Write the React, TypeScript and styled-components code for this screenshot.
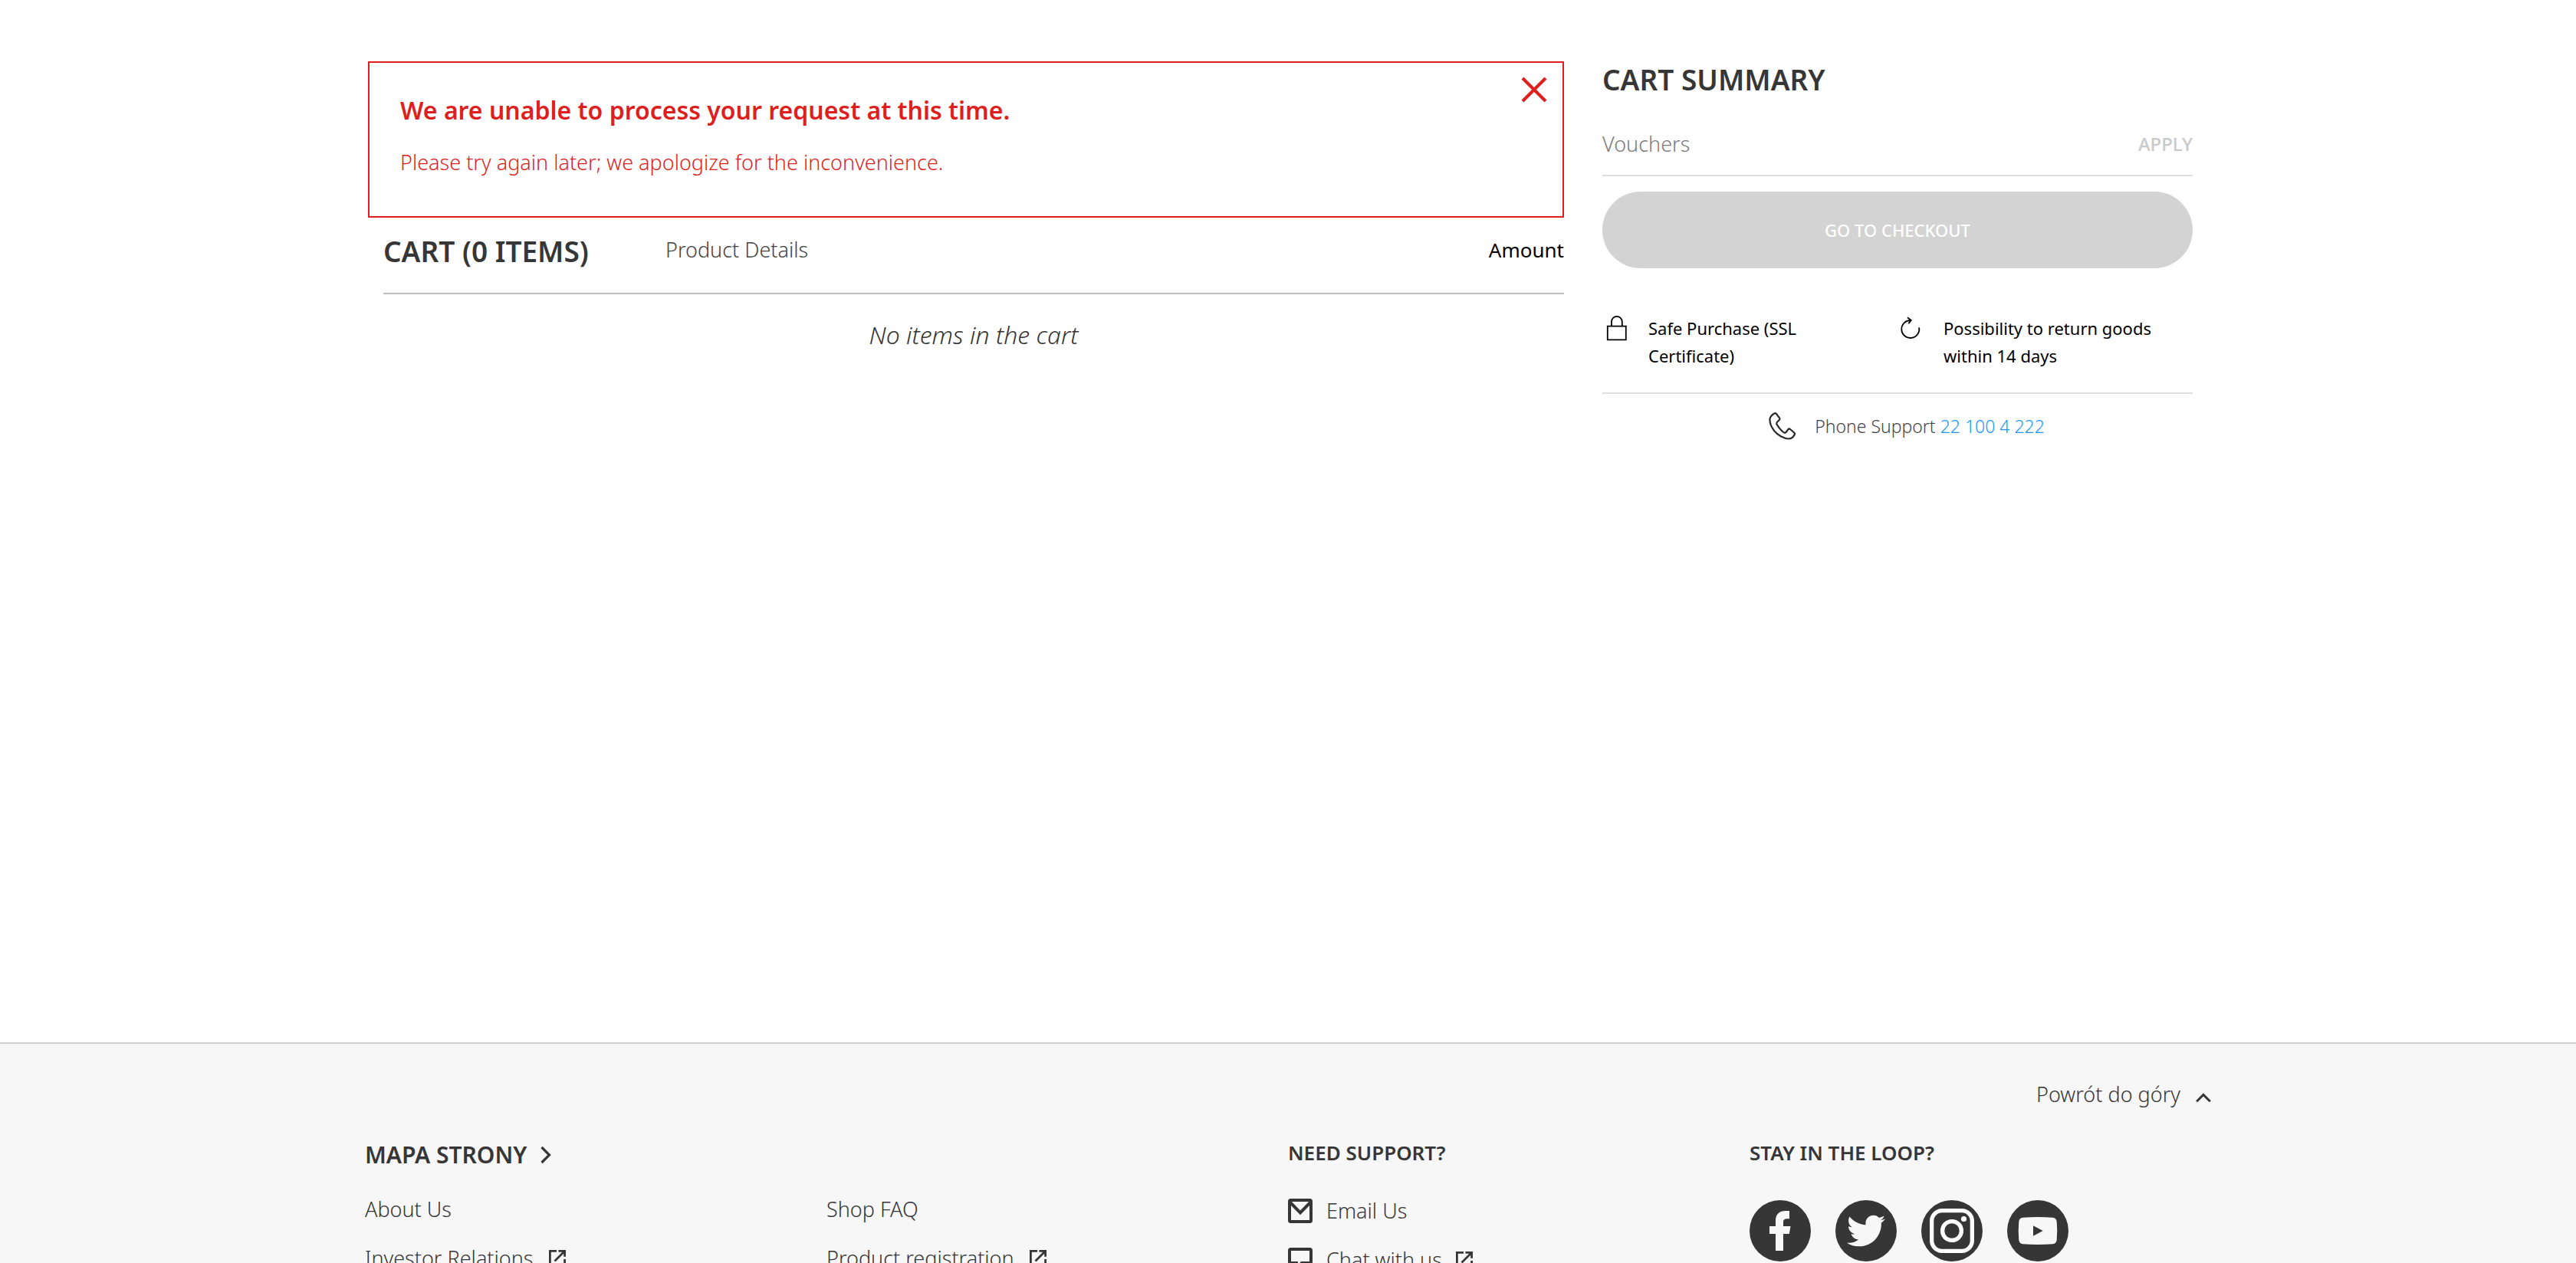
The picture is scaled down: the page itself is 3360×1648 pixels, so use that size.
import React, { useState } from 'react';
import styled, { createGlobalStyle } from 'styled-components';
import { FaTwitter } from 'react-icons/fa';

const ink = '#363636';
const red = '#dd1f1f';

const GlobalStyle = createGlobalStyle`
  *, *::before, *::after { box-sizing: border-box; }
  body {
    margin: 0;
    background: #fff;
    color: ${ink};
    font-family: 'Noto Sans', 'Open Sans', sans-serif;
    font-size: 27px;
    font-weight: 300;
    line-height: 40px;
  }
  h1, h2, h3, p, ul { margin: 0; padding: 0; }
  ul { list-style: none; }
  button, input { font: inherit; color: inherit; background: none; border: 0; padding: 0; margin: 0; }
  button:enabled { cursor: pointer; }
  a { color: inherit; text-decoration: none; }
  svg { display: block; flex: none; }
`;

const Page = styled.div`
  height: 100vh;
  overflow: hidden;
`;

const Main = styled.main`
  display: grid;
  grid-template-columns: minmax(0, 2fr) minmax(0, 1fr);
  align-content: start;
  max-width: 2400px;
  min-height: 1360px;
  margin: 0 auto;
  padding-top: 80px;
`;

const CartColumn = styled.section`
  padding-right: 40px;
`;

const Alert = styled.div`
  display: flex;
  justify-content: space-between;
  align-items: flex-start;
  border: 2px solid ${red};
  padding: 18px 20px 50px 40px;
  color: ${red};
`;

const AlertBody = styled.div`
  padding-top: 22px;
`;

const AlertTitle = styled.h2`
  margin-bottom: 26px;
  font-size: 32px;
  font-weight: 600;
  line-height: 44px;
`;

const CartHeader = styled.header`
  display: grid;
  grid-template-columns: 368px 1fr auto;
  margin-left: 20px;
  padding: 18px 0 28px;
  border-bottom: 2px solid #bdbdbd;
  line-height: 48px;
`;

const CartTitle = styled.h1`
  font-size: 37px;
  font-weight: 600;
  line-height: 52px;
`;

const ProductLabel = styled.span`
  color: #444;
`;

const AmountLabel = styled.span`
  color: #000;
  font-size: 26px;
  font-weight: 400;
`;

const EmptyMessage = styled.p`
  margin-left: 20px;
  padding-top: 30px;
  font-size: 32px;
  font-style: italic;
  line-height: 46px;
  text-align: center;
`;

const Summary = styled.aside`
  padding: 0 20px 0 10px;
`;

const SummaryTitle = styled.h2`
  font-size: 37px;
  font-weight: 600;
  line-height: 48px;
`;

const VoucherForm = styled.form`
  display: flex;
  align-items: center;
  padding: 40px 0 20px;
  border-bottom: 2px solid #ddd;
`;

const VoucherInput = styled.input`
  flex: 1;
  min-width: 0;
  height: 40px;
  outline: none;
  &::placeholder { color: #7c7c7c; opacity: 1; }
`;

const ApplyButton = styled.button`
  color: #c9c9c9;
  font-size: 24px;
  font-weight: 500;
`;

const CheckoutButton = styled.button`
  width: 100%;
  height: 100px;
  margin-top: 20px;
  border-radius: 50px;
  background: #d3d3d3;
  color: #fff;
  font-size: 22px;
  font-weight: 500;
`;

const Assurances = styled.ul`
  display: grid;
  grid-template-columns: 1fr 1fr;
  margin-top: 60px;
  padding-bottom: 30px;
  border-bottom: 2px solid #dedede;
  color: #000;
  font-size: 22px;
  font-weight: 400;
  line-height: 36px;
`;

const Assurance = styled.li`
  display: grid;
  grid-template-columns: 32px 1fr;
  column-gap: 24px;
  padding: 0 36px 0 4px;
`;

const PhoneSupport = styled.p`
  display: flex;
  justify-content: center;
  padding-top: 24px;
  color: #444;
  font-size: 23px;
  line-height: 36px;
  svg { margin: 0 24px; }
`;

const PhoneLink = styled.a`
  color: #2199f5;
`;

const Footer = styled.footer`
  padding: 46px 0 60px;
  border-top: 2px solid #d0d0d0;
  background: #f7f7f7;
`;

const FooterInner = styled.div`
  max-width: 2408px;
  margin: 0 auto;
`;

const BackToTop = styled.a`
  display: flex;
  justify-content: flex-end;
  align-items: center;
  gap: 20px;
`;

const FooterColumns = styled.div`
  display: grid;
  grid-template-columns: 2fr 1fr 1fr;
  margin-top: 36px;
`;

const SitemapTitle = styled.h3`
  font-size: 30px;
  font-weight: 600;
  line-height: 46px;
`;

const FooterTitle = styled.h3`
  font-size: 26px;
  font-weight: 600;
  line-height: 40px;
`;

const SitemapLists = styled.div`
  display: grid;
  grid-template-columns: 1fr 1fr;
  margin-top: 28px;
`;

const LinkList = styled.ul`
  display: grid;
  row-gap: 24px;
`;

const SupportList = styled(LinkList)`
  margin-top: 36px;
`;

const IconLink = styled.a<{ $gap: number }>`
  display: inline-flex;
  align-items: center;
  gap: ${({ $gap }) => $gap}px;
  vertical-align: top;
`;

const SocialList = styled.ul`
  display: flex;
  gap: 32px;
  margin-top: 42px;
`;

const SocialLink = styled.a`
  display: grid;
  place-items: center;
  width: 80px;
  height: 80px;
  border-radius: 50%;
  background: ${ink};
  color: #f7f7f7;
`;

const CloseIcon = () => (
  <svg width="34" height="34" viewBox="0 0 34 34" fill="none" stroke="currentColor" strokeWidth="4.2">
    <path d="M2 2l30 30M32 2L2 32" />
  </svg>
);

const LockIcon = () => (
  <svg width="32" height="36" viewBox="0 0 32 36" fill="none" stroke="currentColor" strokeWidth="1.8">
    <path d="M2.8 15.6h24v17.8h-24zM8 15.6V9.8a6.9 6.9 0 0 1 13.8 0v5.8" />
  </svg>
);

const ReturnIcon = () => (
  <svg width="32" height="36" viewBox="0 0 32 36" fill="none" stroke="currentColor" strokeWidth="1.8">
    <path d="M24.1 17.3A11.5 11.5 0 1 1 13.3 8M9 4.3l4.800 3.500-3.500 4.400" />
  </svg>
);

const PhoneIcon = () => (
  <svg width="36" height="36" viewBox="0 0 36 36" fill="none" stroke="#2b2b2b" strokeWidth="2.2">
    <path d="M7.3 1.5C4 3.5 1.8 5.5 1.5 9C1.2 14 4 20 7.5 24.5C12 30 20 34.5 26 34.5C29.5 34.5 32.5 32 34 28.5C34.3 27.5 34 27 33 26.3L28 22C27 21.3 26 21.4 25.3 22.2L23 25.5C22 26.8 20.5 27 19.2 26C16.5 24 12.5 19 10.6 15.8C10 14.3 10.3 13.3 11.2 12.5L13.8 10C14.6 9.2 14.6 8.3 14 7.4L10 2C9.2 1.1 8.2 1 7.3 1.5Z" />
  </svg>
);

const ChevronUp = () => (
  <svg width="20" height="32" viewBox="0 0 20 32" fill="none" stroke="currentColor" strokeWidth="3">
    <path d="M1.2 25.2L10 16.4l8.8 8.8" />
  </svg>
);

const ChevronRight = () => (
  <svg width="14" height="24" viewBox="0 0 14 24" fill="none" stroke="currentColor" strokeWidth="3.2">
    <path d="M1.5 2L11.5 12l-10 10" />
  </svg>
);

const ExternalIcon = () => (
  <svg width="22" height="22" viewBox="0 0 22 22" fill="none" stroke="currentColor" strokeWidth="2.8">
    <path d="M10 1.4H1.4v19.2h19.2V12M12.500 1.400h8.100v7.400M7.500 14.500L20.500 1.500" />
  </svg>
);

const MailIcon = () => (
  <svg width="32" height="32" viewBox="0 0 32 32" fill="none" stroke="currentColor" strokeWidth="4">
    <rect x="2" y="2" width="28" height="28" rx="1.5" />
    <path d="M2.5 4.5L16 18.4 29.5 4.5" />
  </svg>
);

const ChatIcon = () => (
  <svg width="32" height="32" viewBox="0 0 32 32" fill="none" stroke="currentColor" strokeWidth="4">
    <path d="M3.5 2h25A1.5 1.5 0 0 1 30 3.5v15A1.5 1.5 0 0 1 28.5 20H18l-7 7v-7H3.5A1.5 1.5 0 0 1 2 18.5v-15A1.5 1.5 0 0 1 3.5 2z" />
  </svg>
);

const FacebookIcon = () => (
  <svg width="80" height="80" viewBox="0 0 80 80" fill="currentColor">
    <path d="M34 66V44h-8V34h8v-7c0-9 5-13 13-13h5v10.3h-3c-3.5 0-5 1.7-5 4.2V34h9.5l-1.7 10H44v22z" />
  </svg>
);

const InstagramIcon = () => (
  <svg width="80" height="80" viewBox="0 0 80 80" fill="none" stroke="#fff" strokeWidth="5.3">
    <rect x="13.65" y="13.65" width="52.7" height="52.7" rx="13.5" />
    <circle cx="40" cy="40" r="12.4" />
    <circle cx="55.5" cy="24.5" r="3.6" fill="#fff" stroke="none" />
  </svg>
);

const YoutubeIcon = () => (
  <svg width="80" height="80" viewBox="0 0 80 80" fill="currentColor">
    <path
      fillRule="evenodd"
      d="M20.5 22.7Q40 21.5 59.5 22.7Q64 23 64.7 28Q65.8 40 64.7 52Q64 57 59.5 57.3Q40 58.5 20.5 57.3Q16 57 15.3 52Q14.2 40 15.3 28Q16 23 20.5 22.7ZM34 33.3v13.4L46.7 40z"
    />
  </svg>
);

const assurances = [
  { icon: <LockIcon />, text: 'Safe Purchase (SSL Certificate)' },
  { icon: <ReturnIcon />, text: 'Possibility to return goods within 14 days' },
];

const sitemap = [
  [{ text: 'About Us' }, { text: 'Investor Relations', external: true }],
  [{ text: 'Shop FAQ' }, { text: 'Product registration', external: true }],
];

const support = [
  { icon: <MailIcon />, text: 'Email Us' },
  { icon: <ChatIcon />, text: 'Chat with us', external: true },
];

const socials = [
  { name: 'Facebook', icon: <FacebookIcon /> },
  { name: 'Twitter', icon: <FaTwitter size={50} /> },
  { name: 'Instagram', icon: <InstagramIcon /> },
  { name: 'YouTube', icon: <YoutubeIcon /> },
];

export default function App() {
  const [alertOpen, setAlertOpen] = useState(true);
  const [voucher, setVoucher] = useState('');

  return (
    <Page>
      <GlobalStyle />
      <Main>
        <CartColumn>
          {alertOpen && (
            <Alert role="alert">
              <AlertBody>
                <AlertTitle>We are unable to process your request at this time.</AlertTitle>
                <p>Please try again later; we apologize for the inconvenience.</p>
              </AlertBody>
              <button type="button" aria-label="Close" onClick={() => setAlertOpen(false)}>
                <CloseIcon />
              </button>
            </Alert>
          )}
          <CartHeader>
            <CartTitle>CART (0 ITEMS)</CartTitle>
            <ProductLabel>Product Details</ProductLabel>
            <AmountLabel>Amount</AmountLabel>
          </CartHeader>
          <EmptyMessage>No items in the cart</EmptyMessage>
        </CartColumn>

        <Summary>
          <SummaryTitle>CART SUMMARY</SummaryTitle>
          <VoucherForm onSubmit={(event) => event.preventDefault()}>
            <VoucherInput
              aria-label="Vouchers"
              placeholder="Vouchers"
              value={voucher}
              onChange={(event) => setVoucher(event.target.value)}
            />
            <ApplyButton type="submit" disabled={!voucher}>APPLY</ApplyButton>
          </VoucherForm>
          <CheckoutButton type="button" disabled>GO TO CHECKOUT</CheckoutButton>
          <Assurances>
            {assurances.map(({ icon, text }) => (
              <Assurance key={text}>
                {icon}
                <span>{text}</span>
              </Assurance>
            ))}
          </Assurances>
          <PhoneSupport>
            <PhoneIcon />
            <span>
              Phone Support <PhoneLink href="tel:221004222">22 100 4 222</PhoneLink>
            </span>
          </PhoneSupport>
        </Summary>
      </Main>

      <Footer>
        <FooterInner>
          <BackToTop href="#">
            Powrót do góry
            <ChevronUp />
          </BackToTop>
          <FooterColumns>
            <nav aria-label="Mapa strony">
              <SitemapTitle>
                <IconLink href="#" $gap={18}>
                  MAPA STRONY
                  <ChevronRight />
                </IconLink>
              </SitemapTitle>
              <SitemapLists>
                {sitemap.map((links) => (
                  <LinkList key={links[0].text}>
                    {links.map(({ text, external }) => (
                      <li key={text}>
                        <IconLink href="#" $gap={20}>
                          {text}
                          {external && <ExternalIcon />}
                        </IconLink>
                      </li>
                    ))}
                  </LinkList>
                ))}
              </SitemapLists>
            </nav>
            <section>
              <FooterTitle>NEED SUPPORT?</FooterTitle>
              <SupportList>
                {support.map(({ icon, text, external }) => (
                  <li key={text}>
                    <IconLink href="#" $gap={18}>
                      {icon}
                      {text}
                      {external && <ExternalIcon />}
                    </IconLink>
                  </li>
                ))}
              </SupportList>
            </section>
            <section>
              <FooterTitle>STAY IN THE LOOP?</FooterTitle>
              <SocialList>
                {socials.map(({ name, icon }) => (
                  <li key={name}>
                    <SocialLink href="#" aria-label={name}>{icon}</SocialLink>
                  </li>
                ))}
              </SocialList>
            </section>
          </FooterColumns>
        </FooterInner>
      </Footer>
    </Page>
  );
}
